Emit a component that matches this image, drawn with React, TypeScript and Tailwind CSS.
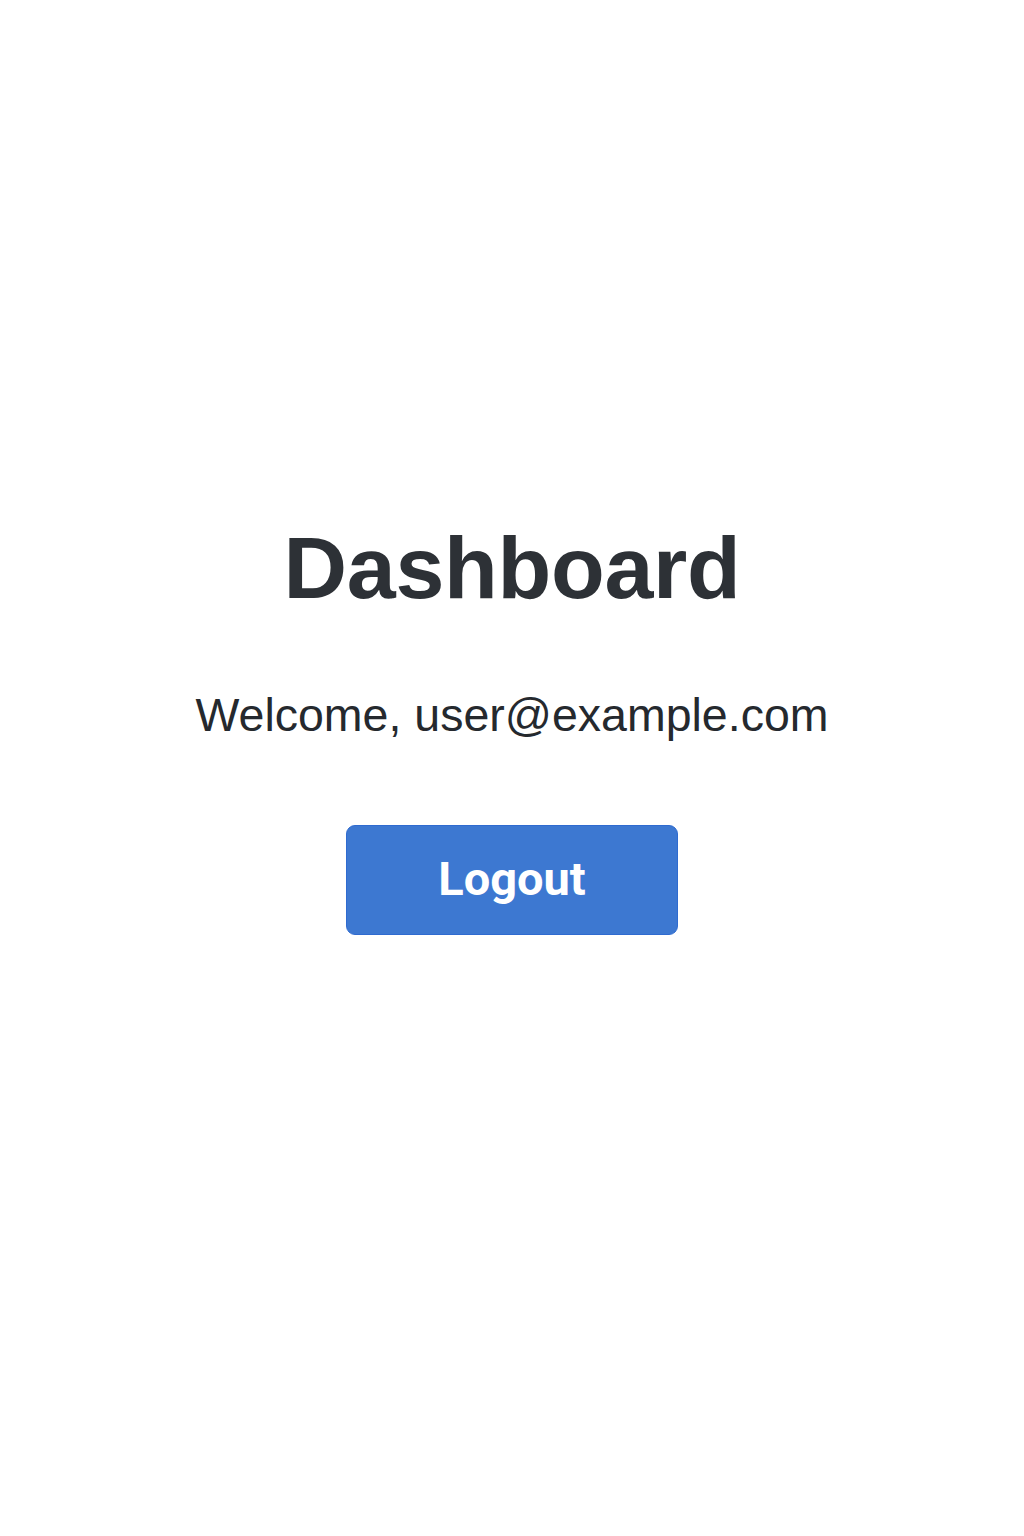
export default function App() {
  const handleLogout = () => {};

  return (
    <div className="min-h-[1536px] w-full bg-white flex flex-col items-center pt-[524px] font-['Liberation_Sans',Arial,sans-serif]">
      <h1 className="text-[88px] leading-none font-bold tracking-[-0.3px] text-[#2d3136]">
        Dashboard
      </h1>

      <p className="mt-[80px] text-[46.5px] leading-none text-[#25292e]">
        Welcome, user@example.com
      </p>

      <button
        onClick={handleLogout}
        className="mt-[86px] w-[332px] h-[110px] rounded-[9px] bg-[#3d78d1] border border-[#2f6bd0] text-white text-[47px] font-bold font-['Roboto',sans-serif] flex items-center justify-center"
      >
        Logout
      </button>
    </div>
  );
}
